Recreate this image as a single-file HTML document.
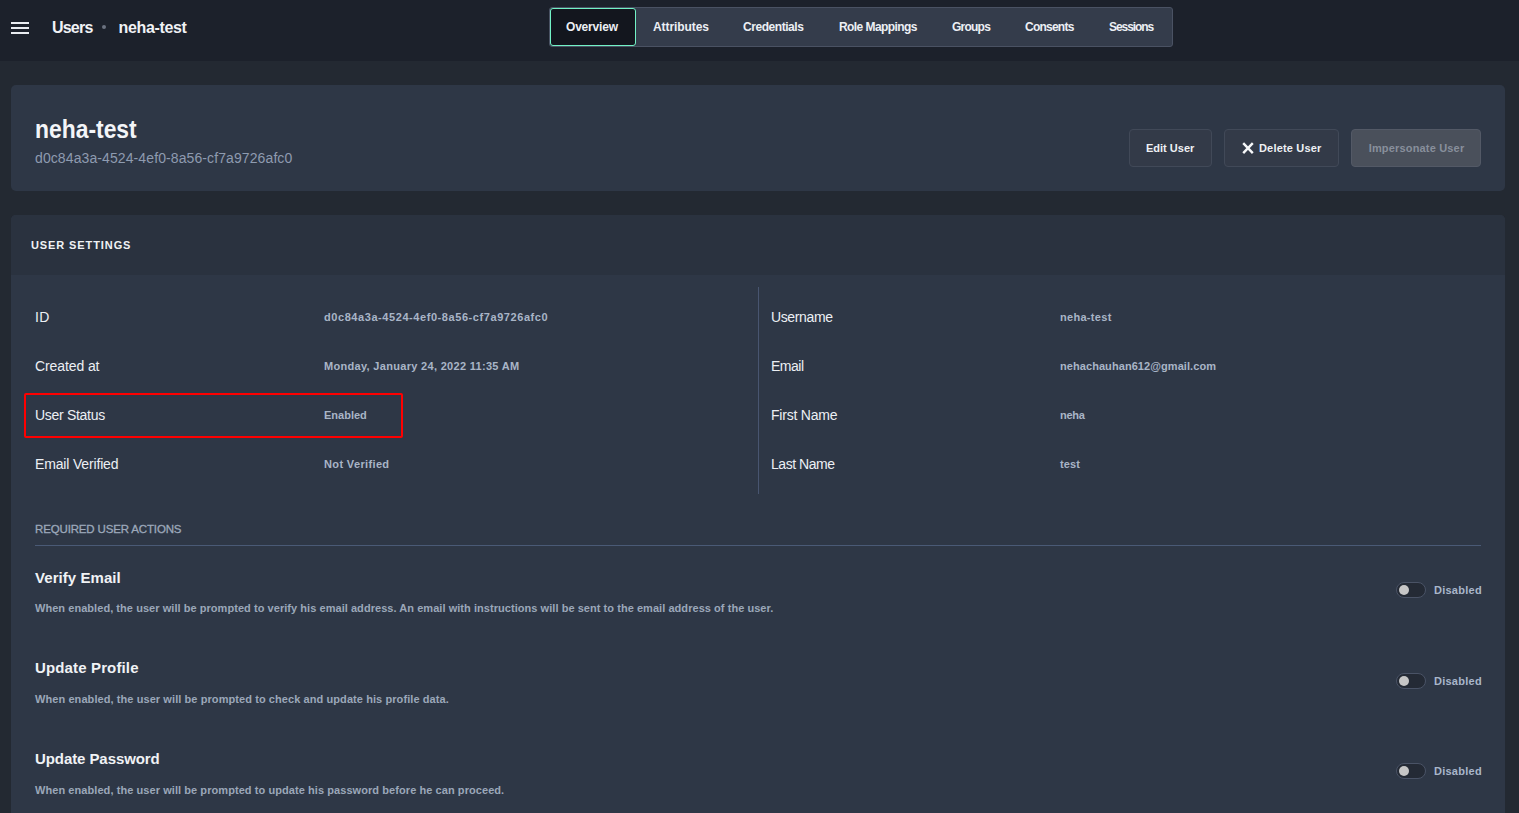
<!DOCTYPE html>
<html><head><meta charset="utf-8">
<style>
*{box-sizing:border-box;margin:0;padding:0}
html,body{width:1519px;height:813px;overflow:hidden;background:#232932;font-family:"Liberation Sans",sans-serif;color:#e5e9f0}
div{position:absolute;white-space:nowrap;line-height:1}
.sx{transform-origin:0 0}
#hdr{left:0;top:0;width:1519px;height:61px;background:#1c212b}
.ham{left:10.5px;width:18.5px;height:2px;background:#e9ecf1}
.crumb{top:20px;font-size:16px;font-weight:bold;color:#f0f2f5}
.dot{left:102px;top:25px;width:4px;height:4px;border-radius:50%;background:#6b7280}
#tabs{left:549px;top:7px;width:624px;height:40px;background:#343c4b;border:1px solid #4a5263;border-radius:3px}
.act{left:550px;top:8px;width:86px;height:38px;background:#13161e;border:1px solid #72f2c6;border-radius:3px}
.tab{top:21.2px;font-size:12px;font-weight:bold;color:#eceff4}
.card{left:11px;width:1494px;background:#2e3746;border-radius:5px}
.btn{top:129px;height:38px;border:1px solid #414958;border-radius:4px;background:#333a48}
.bt{top:142.5px;font-size:11px;font-weight:bold;color:#eef0f4}
.lbl{font-size:14px;color:#eceff4}
.val{font-size:11px;font-weight:bold;color:#a9b5c7}
.h{left:35px;font-size:15px;font-weight:bold;color:#f0f2f5}
.d{left:35px;font-size:11px;font-weight:bold;color:#9ba7b9}
.tg{left:1396px;width:30px;height:16px;border:1px solid #4a5366;border-radius:8px;background:#242a35}
.tg:after{content:"";position:absolute;left:2px;top:2px;width:10px;height:10px;border-radius:50%;background:#c6c6c6}
.dis{left:1434px;font-size:11px;font-weight:bold;color:#a9b6ca}
</style></head><body>
<div id="hdr"></div>
<div class="ham" style="top:22px"></div>
<div class="ham" style="top:27px"></div>
<div class="ham" style="top:32px"></div>
<div class="crumb" style="left:52px;letter-spacing:-0.8px">Users</div>
<div class="dot"></div>
<div class="crumb" style="left:118.5px;letter-spacing:-0.35px">neha-test</div>
<div id="tabs"></div>
<div class="act"></div>
<div class="tab" style="left:566px;letter-spacing:-0.2px">Overview</div>
<div class="tab" style="left:653px;letter-spacing:-0.07px">Attributes</div>
<div class="tab" style="left:743px;letter-spacing:-0.45px">Credentials</div>
<div class="tab" style="left:839px;letter-spacing:-0.57px">Role Mappings</div>
<div class="tab" style="left:952px;letter-spacing:-0.76px">Groups</div>
<div class="tab" style="left:1025px;letter-spacing:-0.76px">Consents</div>
<div class="tab" style="left:1109px;letter-spacing:-1.06px">Sessions</div>

<div class="card" style="top:85px;height:106px"></div>
<div class="sx" style="left:35px;top:116px;font-size:26px;font-weight:bold;color:#f3f5f8;transform:scaleX(0.88)">neha-test</div>
<div style="left:35px;top:151px;font-size:14px;color:#8e9bb0;letter-spacing:0.1px">d0c84a3a-4524-4ef0-8a56-cf7a9726afc0</div>
<div class="btn" style="left:1129px;width:83px"></div>
<div class="btn" style="left:1224px;width:115px"></div>
<div class="btn" style="left:1351px;width:130px;background:#4a505b;border-color:#535966"></div>
<div class="bt" style="left:1146px;letter-spacing:0px">Edit User</div>
<svg style="position:absolute;left:1242px;top:142px" width="12" height="12" viewBox="0 0 12 12"><path d="M1.2 1.1L10.8 11.1M10.8 1.1L1.2 11.1" stroke="#f6f7f9" stroke-width="2.4"/></svg>
<div class="bt" style="left:1259px;letter-spacing:0.18px">Delete User</div>
<div class="bt" style="left:1368.7px;letter-spacing:0.17px;color:#888f9b">Impersonate User</div>

<div class="card" style="top:215px;height:620px"></div>
<div style="left:11px;top:215px;width:1494px;height:60px;background:#2a323f;border-radius:5px 5px 0 0"></div>
<div style="left:31px;top:239.5px;font-size:11px;font-weight:bold;letter-spacing:0.9px;color:#f0f2f5">USER SETTINGS</div>

<div class="lbl" style="left:35px;top:310px;letter-spacing:0.3px">ID</div>
<div class="lbl" style="left:35px;top:359px;letter-spacing:-0.1px">Created at</div>
<div class="lbl" style="left:35px;top:408px;letter-spacing:-0.3px">User Status</div>
<div class="lbl" style="left:35px;top:457px;letter-spacing:-0.16px">Email Verified</div>
<div class="val" style="left:324px;top:312px;letter-spacing:0.57px">d0c84a3a-4524-4ef0-8a56-cf7a9726afc0</div>
<div class="val" style="left:324px;top:361px;letter-spacing:0.31px">Monday, January 24, 2022 11:35 AM</div>
<div class="val" style="left:324px;top:410px;letter-spacing:0px">Enabled</div>
<div class="val" style="left:324px;top:459px;letter-spacing:0.36px">Not Verified</div>
<div style="left:24px;top:393px;width:379px;height:45px;border:2px solid #ff0000;border-radius:2px"></div>

<div style="left:758px;top:287px;width:1px;height:207px;background:#485570"></div>
<div class="lbl" style="left:771px;top:310px;letter-spacing:-0.37px">Username</div>
<div class="lbl" style="left:771px;top:359px;letter-spacing:-0.5px">Email</div>
<div class="lbl" style="left:771px;top:408px;letter-spacing:-0.22px">First Name</div>
<div class="lbl" style="left:771px;top:457px;letter-spacing:-0.47px">Last Name</div>
<div class="val" style="left:1060px;top:312px;letter-spacing:0.3px">neha-test</div>
<div class="val" style="left:1060px;top:361px;letter-spacing:0.07px">nehachauhan612@gmail.com</div>
<div class="val" style="left:1060px;top:410px;letter-spacing:-0.3px">neha</div>
<div class="val" style="left:1060px;top:459px;letter-spacing:0.13px">test</div>

<div style="left:35px;top:524.3px;font-size:11.5px;color:#9ca8ba;letter-spacing:-0.15px;-webkit-text-stroke:0.3px #9ca8ba">REQUIRED USER ACTIONS</div>
<div style="left:35px;top:545px;width:1446px;height:1px;background:#4a5a76"></div>

<div class="h" style="top:570px;letter-spacing:0.06px">Verify Email</div>
<div class="d" style="top:603px;letter-spacing:0.05px">When enabled, the user will be prompted to verify his email address. An email with instructions will be sent to the email address of the user.</div>
<div class="tg" style="top:582px"></div><div class="dis" style="top:584.5px;letter-spacing:0.25px">Disabled</div>

<div class="h" style="top:660px;letter-spacing:0.14px">Update Profile</div>
<div class="d" style="top:694px;letter-spacing:0.08px">When enabled, the user will be prompted to check and update his profile data.</div>
<div class="tg" style="top:673px"></div><div class="dis" style="top:675.5px;letter-spacing:0.25px">Disabled</div>

<div class="h" style="top:751px;letter-spacing:-0.08px">Update Password</div>
<div class="d" style="top:785px;letter-spacing:0.07px">When enabled, the user will be prompted to update his password before he can proceed.</div>
<div class="tg" style="top:763px"></div><div class="dis" style="top:765.5px;letter-spacing:0.25px">Disabled</div>
</body></html>
